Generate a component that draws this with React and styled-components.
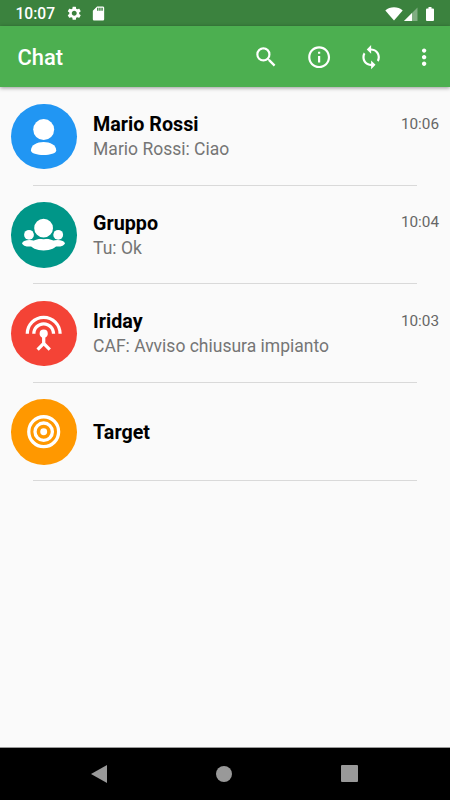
import React from 'react';
import styled, { createGlobalStyle } from 'styled-components';
import {
  MdInfoOutline,
  MdMoreVert,
  MdSdCard,
  MdSearch,
  MdSettings,
  MdSettingsInputAntenna,
  MdSync,
} from 'react-icons/md';

const GlobalStyle = createGlobalStyle`
  * {
    box-sizing: border-box;
  }

  body {
    margin: 0;
    font-family: Roboto, 'Liberation Sans', sans-serif;
    background: #fafafa;
  }
`;

const Screen = styled.div`
  display: flex;
  flex-direction: column;
  width: 450px;
  height: 800px;
  background: #fafafa;
  overflow: hidden;
`;

const StatusBar = styled.div`
  display: flex;
  flex: none;
  align-items: center;
  height: 26px;
  padding: 1px 16.5px 0 15.5px;
  background: #3b823e;
  color: #fff;

  svg {
    display: block;
  }
`;

const Clock = styled.span`
  width: 50.5px;
  font-size: 15.6px;
  font-weight: 500;
  line-height: 24px;
`;

const StatusIcons = styled.div`
  display: flex;
  align-items: center;
  gap: 7.5px;
`;

const SystemIcons = styled.div`
  display: flex;
  align-items: center;
  gap: 1px;
  margin-left: auto;

  svg:last-child {
    margin-left: 7px;
  }
`;

const AppBar = styled.header`
  display: flex;
  flex: none;
  align-items: center;
  height: 61px;
  padding: 1px 0 0 17.5px;
  background: #4caf50;
  color: #fff;
  box-shadow: 0 1px 4px rgba(0, 0, 0, 0.4);
`;

const Title = styled.h1`
  margin: 0 auto 0 0;
  font-size: 21.9px;
  font-weight: 500;
`;

const IconButton = styled.button`
  display: flex;
  align-items: center;
  justify-content: center;
  width: 52.5px;
  height: 52.5px;
  padding: 0;
  border: none;
  background: none;
  color: #fff;
`;

const ChatList = styled.main`
  flex: 1;
  padding-top: 0.4px;
`;

const ChatRow = styled.div`
  display: flex;
  align-items: center;
  height: 98.44px;
  padding: 0 11px;
  background: linear-gradient(#d9d9d9, #d9d9d9) no-repeat 33px 97.4px / 384px 1px;
`;

const Avatar = styled.div`
  display: flex;
  flex: none;
  align-items: center;
  justify-content: center;
  width: 65.6px;
  height: 65.6px;
  border-radius: 50%;
  background: ${({ $color }) => $color};
  color: #fff;
`;

const Texts = styled.div`
  flex: 1;
  margin-left: 16.5px;
  padding-top: 1.6px;
`;

const Name = styled.div`
  font-size: 19.7px;
  font-weight: 700;
  line-height: 25px;
  color: #000;
`;

const Message = styled.div`
  font-size: 17.5px;
  line-height: 25.6px;
  color: #757575;
`;

const Time = styled.span`
  align-self: flex-start;
  margin-top: 26.6px;
  font-size: 15.3px;
  line-height: 20px;
  color: #666;
`;

const NavBar = styled.nav`
  display: flex;
  flex: none;
  align-items: center;
  justify-content: center;
  gap: 108.7px;
  height: 53px;
  padding: 0 1px 1px 0;
  border-top: 1px solid #999;
  background: #000;
`;

function PersonIcon() {
  return (
    <svg width="65.6" height="65.6" viewBox="0 0 65.6 65.6" fill="currentColor">
      <circle cx="32.7" cy="25.6" r="10.5" />
      <path d="M20 46.3C20 41 26 38 32.6 38S45.2 41 45.2 46.3C45.2 49.7 39 51 32.6 51S20 49.7 20 46.3Z" />
    </svg>
  );
}

function GroupIcon() {
  return (
    <svg width="65.6" height="65.6" viewBox="0 0 65.6 65.6" fill="currentColor">
      <circle cx="18" cy="32.8" r="4.9" />
      <circle cx="47.2" cy="32.8" r="4.9" />
      <ellipse cx="18.5" cy="41.3" rx="7.3" ry="3.3" />
      <ellipse cx="46.5" cy="41.3" rx="7.3" ry="3.3" />
      <ellipse cx="32.6" cy="42.6" rx="12.9" ry="6" />
      <circle cx="32.6" cy="26.2" r="10.2" stroke="#009688" strokeWidth="1.6" />
    </svg>
  );
}

function TargetIcon() {
  return (
    <svg width="39.4" height="39.4" viewBox="0 0 24 24" fill="none" stroke="currentColor" strokeWidth="2">
      <circle cx="12" cy="12" r="9.1" />
      <circle cx="12" cy="12" r="5.3" />
      <circle cx="12" cy="12" r="2.1" fill="currentColor" stroke="none" />
    </svg>
  );
}

function WifiIcon() {
  return (
    <svg width="18" height="14" viewBox="0 0 18 14" fill="#fff">
      <path d="M0.3 3.4C5 -0.9 13 -0.9 17.7 3.4L9 13.5Z" />
    </svg>
  );
}

function SignalIcon() {
  return (
    <svg width="14" height="14" viewBox="0 0 14 14" fill="#fff">
      <path d="M13.5 0.5V14H0Z" opacity="0.35" />
      <path d="M8 6V14H0Z" />
    </svg>
  );
}

function BatteryIcon() {
  return (
    <svg width="8" height="14" viewBox="0 0 8 14" fill="#fff">
      <path d="M2.5 0h3v1.5H7q1 0 1 1V13q0 1-1 1H1q-1 0-1-1V2.5q0-1 1-1h1.5z" />
    </svg>
  );
}

const chats = [
  { name: 'Mario Rossi', message: 'Mario Rossi: Ciao', time: '10:06', color: '#2196f3', icon: <PersonIcon /> },
  { name: 'Gruppo', message: 'Tu: Ok', time: '10:04', color: '#009688', icon: <GroupIcon /> },
  {
    name: 'Iriday',
    message: 'CAF: Avviso chiusura impianto',
    time: '10:03',
    color: '#f44336',
    icon: <MdSettingsInputAntenna size={39.4} />,
  },
  { name: 'Target', color: '#ff9800', icon: <TargetIcon /> },
];

function App() {
  return (
    <>
      <GlobalStyle />
      <Screen>
        <StatusBar>
          <Clock>10:07</Clock>
          <StatusIcons>
            <MdSettings size={16.5} />
            <MdSdCard size={17} />
          </StatusIcons>
          <SystemIcons>
            <WifiIcon />
            <SignalIcon />
            <BatteryIcon />
          </SystemIcons>
        </StatusBar>
        <AppBar>
          <Title>Chat</Title>
          <IconButton><MdSearch size={26.25} /></IconButton>
          <IconButton><MdInfoOutline size={26.25} /></IconButton>
          <IconButton><MdSync size={26.25} /></IconButton>
          <IconButton><MdMoreVert size={26.25} /></IconButton>
        </AppBar>
        <ChatList>
          {chats.map((chat) => (
            <ChatRow key={chat.name}>
              <Avatar $color={chat.color}>{chat.icon}</Avatar>
              <Texts>
                <Name>{chat.name}</Name>
                {chat.message && <Message>{chat.message}</Message>}
              </Texts>
              {chat.time && <Time>{chat.time}</Time>}
            </ChatRow>
          ))}
        </ChatList>
        <NavBar>
          <svg width="16" height="18" viewBox="0 0 16 18" fill="#999">
            <path d="M16 0V18L0 9Z" />
          </svg>
          <svg width="16" height="16" viewBox="0 0 16 16" fill="#999">
            <circle cx="8" cy="8" r="8" />
          </svg>
          <svg width="17" height="17" viewBox="0 0 17 17" fill="#999">
            <rect width="17" height="17" rx="1" />
          </svg>
        </NavBar>
      </Screen>
    </>
  );
}

export default App;
